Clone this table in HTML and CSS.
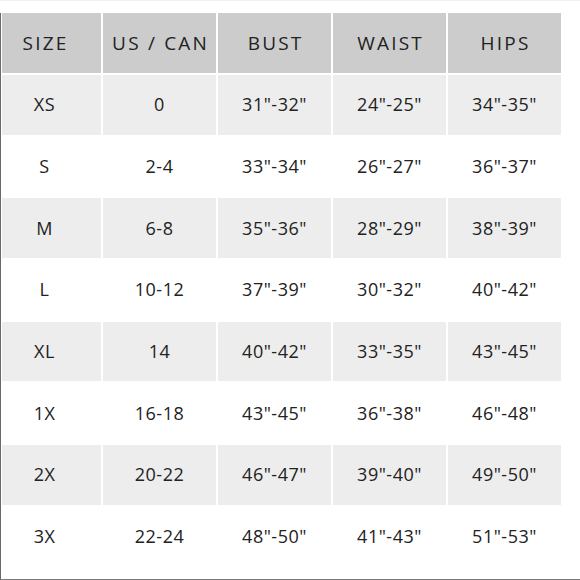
FILE: index.html
```html
<!DOCTYPE html>
<html>
<head>
<meta charset="utf-8">
<link rel="stylesheet" href="styles.css">
</head>
<body>
<div class="frame">
  <div class="clip">
    <div class="chart">
      <div class="cell head">SIZE</div>
      <div class="cell head">US / CAN</div>
      <div class="cell head">BUST</div>
      <div class="cell head">WAIST</div>
      <div class="cell head">HIPS</div>

      <div class="cell shade">XS</div>
      <div class="cell shade">0</div>
      <div class="cell shade">31"-32"</div>
      <div class="cell shade">24"-25"</div>
      <div class="cell shade">34"-35"</div>

      <div class="cell">S</div>
      <div class="cell">2-4</div>
      <div class="cell">33"-34"</div>
      <div class="cell">26"-27"</div>
      <div class="cell">36"-37"</div>

      <div class="cell shade">M</div>
      <div class="cell shade">6-8</div>
      <div class="cell shade">35"-36"</div>
      <div class="cell shade">28"-29"</div>
      <div class="cell shade">38"-39"</div>

      <div class="cell">L</div>
      <div class="cell">10-12</div>
      <div class="cell">37"-39"</div>
      <div class="cell">30"-32"</div>
      <div class="cell">40"-42"</div>

      <div class="cell shade">XL</div>
      <div class="cell shade">14</div>
      <div class="cell shade">40"-42"</div>
      <div class="cell shade">33"-35"</div>
      <div class="cell shade">43"-45"</div>

      <div class="cell">1X</div>
      <div class="cell">16-18</div>
      <div class="cell">43"-45"</div>
      <div class="cell">36"-38"</div>
      <div class="cell">46"-48"</div>

      <div class="cell shade">2X</div>
      <div class="cell shade">20-22</div>
      <div class="cell shade">46"-47"</div>
      <div class="cell shade">39"-40"</div>
      <div class="cell shade">49"-50"</div>

      <div class="cell">3X</div>
      <div class="cell">22-24</div>
      <div class="cell">48"-50"</div>
      <div class="cell">41"-43"</div>
      <div class="cell">51"-53"</div>
    </div>
  </div>
</div>
</body>
</html>
```

FILE: styles.css
```css
html, body {
  margin: 0;
  padding: 0;
  background: #ffffff;
}

body {
  width: 580px;
  height: 580px;
  overflow: hidden;
  border-top: 1px solid #f0f0f0;
  box-sizing: border-box;
  font-family: "Open Sans", "Liberation Sans", sans-serif;
  color: #222222;
}

.frame {
  margin-top: 12px;
  height: 567px;
  box-sizing: border-box;
  border-left: 1px solid #6a6a6a;
  border-bottom: 1px solid #7a7a7a;
}

.clip {
  margin-left: 1px;
  overflow: hidden;
  height: 100%;
}

.chart {
  margin-left: -14px;
  display: grid;
  grid-template-columns: repeat(5, 113px);
  grid-template-rows: 60px;
  grid-auto-rows: 59.67px;
  gap: 2px;
}

.cell {
  display: flex;
  align-items: center;
  justify-content: center;
  padding-bottom: 1px;
  font-size: 18px;
  letter-spacing: 0.5px;
  background: #ffffff;
}

.head {
  background: #cccccc;
  padding-bottom: 0;
  font-size: 19px;
  font-weight: 500;
  letter-spacing: 2.2px;
  padding-left: 2.2px;
}

.shade {
  background: #ededed;
}
```
